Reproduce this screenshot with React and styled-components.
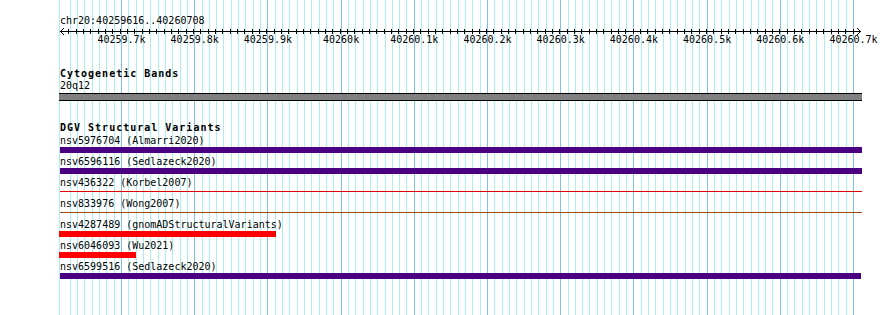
import React from 'react';
import styled, { createGlobalStyle } from 'styled-components';

const GlobalStyle = createGlobalStyle`
  html, body { margin: 0; padding: 0; background: #ffffff; }
  body {
    font-family: "DejaVu Sans Mono", "Liberation Mono", monospace;
    font-size: 10px;
    color: #000000;
  }
`;

const VIEW_START = 40259616;
const VIEW_END = 40260708;
const TRACK_WIDTH = 802;
const featX = (bp) => ((bp - VIEW_START) * TRACK_WIDTH) / (VIEW_END - VIEW_START);
const gridX = (bp) => 121 + (bp - 40259700) * 0.732;
const tickX = (bp) => 68.3 + (bp - 40259630) * 0.7331;
const RULER_SVG_LEFT = 56;

const gridStops = [];
for (let bp = 40259630; bp <= 40260700; bp += 10) gridStops.push(bp);
const majorStops = gridStops.filter((bp) => bp % 100 === 0);

const fmtLabel = (bp) => {
  const k = bp / 1000;
  return Number.isInteger(k) ? `${k}k` : `${k.toFixed(1)}k`;
};

const features = [
  { id: 'nsv5976704', src: 'Almarri2020', kind: 'bar', color: '#4b0082', start: 40259616, end: 40260708 },
  { id: 'nsv6596116', src: 'Sedlazeck2020', kind: 'bar', color: '#4b0082', start: 40259616, end: 40260708 },
  { id: 'nsv436322', src: 'Korbel2007', kind: 'line', color: '#e00000', start: 40259616, end: 40260708 },
  { id: 'nsv833976', src: 'Wong2007', kind: 'line', color: '#9c4a12', start: 40259616, end: 40260708 },
  { id: 'nsv4287489', src: 'gnomADStructuralVariants', kind: 'bar', color: '#ff0000', start: 40259615, end: 40259910 },
  { id: 'nsv6046093', src: 'Wu2021', kind: 'bar', color: '#ff0000', start: 40259615, end: 40259720 },
  { id: 'nsv6599516', src: 'Sedlazeck2020', kind: 'bar', color: '#4b0082', start: 40259616, end: 40260707 },
];

const Page = styled.div`
  position: relative;
  width: 890px;
  height: 315px;
  overflow: hidden;
  background: #ffffff;
`;

const GridLayer = styled.div`
  position: absolute;
  inset: 0;
  z-index: 0;
  pointer-events: none;
`;

const GridLine = styled.div`
  position: absolute;
  top: 0;
  bottom: 0;
  width: 1px;
  background: ${(p) => (p.$major ? '#7fc1ea' : '#aeeeee')};
`;

const Content = styled.div`
  position: relative;
  z-index: 1;
  width: ${TRACK_WIDTH}px;
  padding: 15px 0 0 60px;
`;

const LocationLabel = styled.div`
  line-height: 11px;
  height: 11px;
  white-space: nowrap;
`;

const RulerBlock = styled.div`
  position: relative;
`;

const RulerSvg = styled.svg`
  display: block;
  margin-left: ${RULER_SVG_LEFT - 60}px;
  width: 810px;
  height: 10px;
  shape-rendering: crispEdges;
`;

const RulerLabels = styled.div`
  position: relative;
  height: 11px;
  margin-top: -2px;
  line-height: 11px;
`;

const RulerLabel = styled.span`
  position: absolute;
  top: 0;
  transform: translateX(-50%);
  white-space: nowrap;
`;

const Track = styled.section`
  margin-top: ${(p) => p.$gap}px;
`;

const TrackLabel = styled.div`
  font-weight: bold;
  letter-spacing: 1px;
  line-height: 12px;
  height: 12px;
  white-space: nowrap;
`;

const SubLabel = styled.div`
  line-height: 11px;
  height: 11px;
`;

const Band = styled.div`
  margin: 2px 0 0 -1px;
  width: 803px;
  height: 6px;
  background: #808080;
  border-top: 1px solid #000000;
  border-bottom: 1px solid #000000;
`;

const FeatureList = styled.div`
  display: flex;
  flex-direction: column;
  padding-top: 1.3px;
`;

const FeatureRow = styled.div`
  height: 20.9px;
  display: flex;
  flex-direction: column;
`;

const FeatureLabel = styled.div`
  line-height: 11px;
  height: 11px;
  white-space: nowrap;
`;

const BarSlot = styled.div`
  position: relative;
  height: 6px;
  margin-top: 1px;
`;

const Bar = styled.div`
  height: ${(p) => (p.$kind === 'line' ? 1 : 6)}px;
  margin-top: ${(p) => (p.$kind === 'line' ? 2 : 0)}px;
  background: ${(p) => p.$color};
`;

function Ruler() {
  const lineStart = 60 - RULER_SVG_LEFT;
  const lineEnd = 861 - RULER_SVG_LEFT;
  return (
    <RulerBlock>
      <RulerSvg viewBox="0 0 810 10">
        <rect x={lineStart} y={5} width={lineEnd - lineStart} height={1} fill="#000" />
        {gridStops.map((bp) => (
          <rect key={bp} x={Math.round(tickX(bp)) - RULER_SVG_LEFT} y={3} width={1} height={5} fill="#000" />
        ))}
        <polyline points={`${lineStart + 4},2 ${lineStart + 0.5},5.5 ${lineStart + 4},9`} fill="none" stroke="#000" strokeWidth="1" />
        <polyline points={`${lineEnd - 4},2 ${lineEnd - 0.5},5.5 ${lineEnd - 4},9`} fill="none" stroke="#000" strokeWidth="1" />
      </RulerSvg>
      <RulerLabels>
        {majorStops.map((bp) => (
          <RulerLabel key={bp} style={{ left: `${gridX(bp) - 60 + 0.5}px` }}>
            {fmtLabel(bp)}
          </RulerLabel>
        ))}
      </RulerLabels>
    </RulerBlock>
  );
}

export default function App() {
  return (
    <>
      <GlobalStyle />
      <Page>
        <GridLayer>
          <GridLine style={{ left: '59px' }} />
          {gridStops.map((bp) => (
            <GridLine key={bp} $major={bp % 100 === 0} style={{ left: `${Math.round(gridX(bp))}px` }} />
          ))}
        </GridLayer>
        <Content>
          <LocationLabel>chr20:40259616..40260708</LocationLabel>
          <Ruler />
          <Track $gap={23}>
            <TrackLabel>Cytogenetic Bands</TrackLabel>
            <SubLabel>20q12</SubLabel>
            <Band />
          </Track>
          <Track $gap={21}>
            <TrackLabel>DGV Structural Variants</TrackLabel>
            <FeatureList>
              {features.map((f) => {
                const left = featX(f.start);
                const width = featX(f.end) - left;
                return (
                  <FeatureRow key={f.id}>
                    <FeatureLabel>{`${f.id} (${f.src})`}</FeatureLabel>
                    <BarSlot>
                      <Bar
                        $kind={f.kind}
                        $color={f.color}
                        style={{ marginLeft: `${left}px`, width: `${width}px` }}
                      />
                    </BarSlot>
                  </FeatureRow>
                );
              })}
            </FeatureList>
          </Track>
        </Content>
      </Page>
    </>
  );
}
